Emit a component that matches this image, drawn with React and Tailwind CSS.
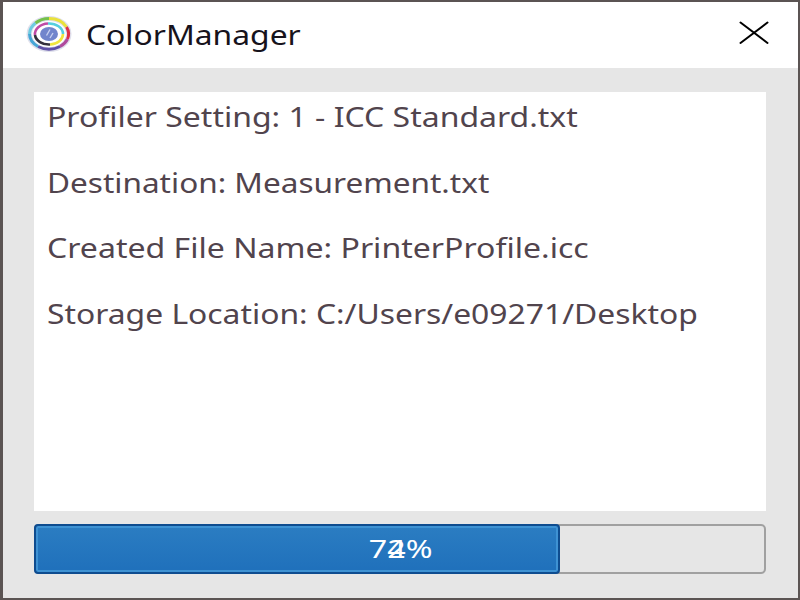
import React from 'react';

const details = [
  { label: 'Profiler Setting', value: '1 - ICC Standard.txt', stretch: 'scale-x-[1.184]' },
  { label: 'Destination', value: 'Measurement.txt', stretch: 'scale-x-[1.168]' },
  { label: 'Created File Name', value: 'PrinterProfile.icc', stretch: 'scale-x-[1.187]' },
  { label: 'Storage Location', value: 'C:/Users/e09271/Desktop', stretch: 'scale-x-[1.179]' },
];

const Logo = () => (
  <svg className="w-[46px] h-[38px] -mt-0.5" viewBox="0 0 46 38" fill="none">
    <ellipse cx="23" cy="19" rx="22.5" ry="18" fill="#dfe0ec" />
    <g strokeWidth="3">
      <path d="M3.5 19 A19.5 15.5 0 0 1 9.5 8" stroke="#6fcbe0" />
      <path d="M9.5 8 A19.5 15.5 0 0 1 23 3.5" stroke="#74c04c" />
      <path d="M23 3.5 A19.5 15.5 0 0 1 40.5 12" stroke="#e9e13b" />
      <path d="M40.5 12 A19.5 15.5 0 0 1 41.5 24" stroke="#dc2f48" />
      <path d="M41.5 24 A19.5 15.5 0 0 1 34 31.5" stroke="#b04a9c" />
      <path d="M34 31.5 A19.5 15.5 0 0 1 12 31.5" stroke="#5e50a6" />
      <path d="M12 31.5 A19.5 15.5 0 0 1 3.5 19" stroke="#46a6d6" />
    </g>
    <ellipse cx="23" cy="19" rx="17" ry="13" fill="#fff" />
    <g strokeWidth="2.6">
      <path d="M9 20 A14 10.5 0 0 1 22 8.5" stroke="#c04aa6" />
      <path d="M22 8.5 A14 10.5 0 0 1 37 19" stroke="#55cfdf" />
      <path d="M37 19 A14 10.5 0 0 1 24 29.5" stroke="#f0e63e" />
      <path d="M24 29.5 A14 10.5 0 0 1 9 20" stroke="#332f3b" />
    </g>
    <ellipse cx="23" cy="19" rx="9" ry="7" fill="#7185cc" />
    <path d="M20.5 20.5 L24 14.5 M24 23 L27 18" stroke="#c6cff0" strokeWidth="1.4" />
  </svg>
);

const TitleBar = () => (
  <header className="h-[66px] shrink-0 flex items-center bg-white pl-[23px] pr-[29px] text-[#17131c]">
    <Logo />
    <h1 className="ml-3.5 -mt-px text-[27px] leading-9 whitespace-nowrap origin-left scale-x-[1.178]">ColorManager</h1>
    <button type="button" aria-label="Close" className="ml-auto mb-1">
      <svg className="block w-[30px] h-6" viewBox="0 0 30 24" fill="none" stroke="#000" strokeWidth="2" strokeLinecap="round">
        <path d="M1.5 1.5 L28.5 22 M28.5 1.5 L1.5 22" />
      </svg>
    </button>
  </header>
);

const ProgressBar = ({ percent }) => (
  <div className="relative h-[50px] shrink-0 rounded-[5px] border-2 border-[#a0a0a0] bg-[#e6e6e6]">
    <div
      className="absolute -top-0.5 -bottom-0.5 -left-0.5 rounded-[4px] border-2 border-[#0e4c8f] bg-linear-to-b from-[#2b7dc2] to-[#1f70bb] shadow-[inset_0_0_0_2px_#3e92d3]"
      style={{ width: `calc(${percent}% + 2px)` }}
    />
    <div className="absolute inset-0 flex items-center justify-center pb-0.5 pl-0.5 text-[25px] leading-none text-white">
      <span className="relative flex scale-x-[1.29]">
        <span>7</span>
        {/* outgoing digit still showing under the new one */}
        <span className="relative">4<span className="absolute left-0 top-0">2</span></span>
        <span>%</span>
      </span>
    </div>
  </div>
);

export default function App() {
  return (
    <div className="w-[800px] h-[600px] flex flex-col overflow-hidden border-t-2 border-l-[3px] border-r-2 border-b-2 border-[#5b5453] bg-[#e6e6e6] font-['Noto_Sans','Open_Sans',sans-serif]">
      <TitleBar />
      <main className="flex-1 flex flex-col gap-[13px] pt-6 pl-[31px] pr-8 pb-6">
        <section className="flex-1 flex flex-col gap-[29.5px] bg-white pl-[12.5px] pt-[7px] text-[27px] leading-9 text-[#51444d]">
          {details.map(({ label, value, stretch }) => (
            <p key={label} className={`w-max whitespace-nowrap origin-left ${stretch}`}>{label}: {value}</p>
          ))}
        </section>
        <ProgressBar percent={72} />
      </main>
    </div>
  );
}
